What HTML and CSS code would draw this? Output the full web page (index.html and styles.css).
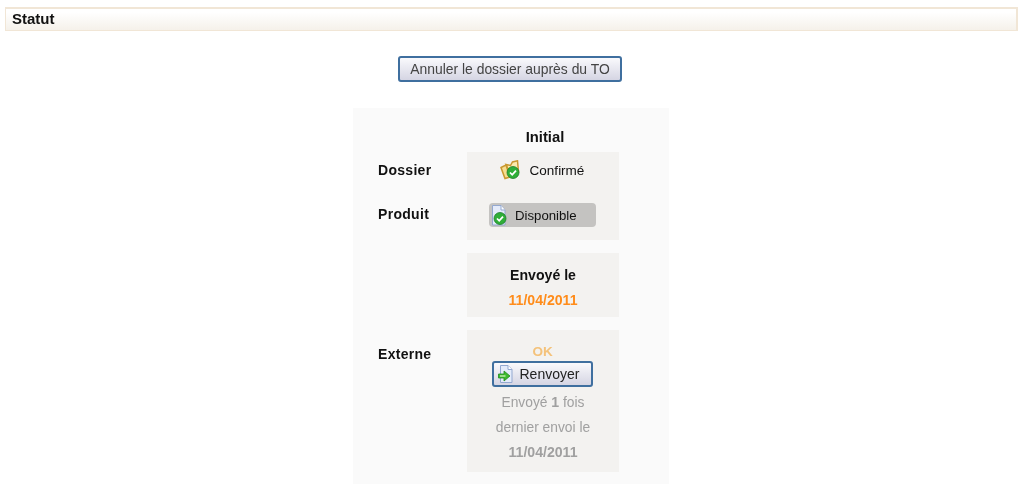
FILE: index.html
```html
<!DOCTYPE html>
<html lang="fr">
<head>
<meta charset="utf-8">
<title>Statut</title>
<link rel="stylesheet" href="styles.css">
</head>
<body>
<h2 class="section-title">Statut</h2>
<div class="actions"><button class="btn btn-cancel" type="button">Annuler le dossier auprès du TO</button></div>
<section class="panel">
  <div class="col-title">Initial</div>
  <div class="row">
    <div class="labels labels-status">
      <span>Dossier</span>
      <span>Produit</span>
    </div>
    <div class="cell cell-status">
      <div class="state">
        <svg class="ico" width="20" height="20" viewBox="0 0 20 20">
          <path d="M1 7.500 6 5l4 12-5 1.500z" fill="#f6dd90" stroke="#c9982f" stroke-width="1.500"/>
          <path d="M6 4.500l4.500 1L12.500 2 17.500 .8l1 11.200-7 4z" fill="#fbeaae" stroke="#c9982f" stroke-width="1.500"/>
          <circle cx="13" cy="12.500" r="6" fill="#2fae38" stroke="#1d7d2a" stroke-width=".8"/>
          <path d="M10 12.500l2.200 2.300 3.800-4.200" fill="none" stroke="#fff" stroke-width="1.800"/>
        </svg>
        <span>Confirmé</span>
      </div>
      <div class="pill">
        <svg class="ico" width="18" height="22" viewBox="0 0 18 22">
          <path d="M1.500 1.500h8.500l4 4.500v15h-12.500z" fill="#e4ebfa" stroke="#93a8d0"/>
          <path d="M10 1.500v4.500h4" fill="#fff" stroke="#93a8d0"/>
          <circle cx="9" cy="14.500" r="6" fill="#2fae38" stroke="#1d7d2a" stroke-width=".8"/>
          <path d="M6 14.500l2.200 2.300 3.800-4.200" fill="none" stroke="#fff" stroke-width="1.800"/>
        </svg>
        <span>Disponible</span>
      </div>
    </div>
  </div>
  <div class="row">
    <div class="labels"></div>
    <div class="cell cell-sent">
      <strong class="sent-title">Envoyé le</strong>
      <strong class="sent-date">11/04/2011</strong>
    </div>
  </div>
  <div class="row">
    <div class="labels labels-ext"><span>Externe</span></div>
    <div class="cell cell-ext">
      <strong class="ok">OK</strong>
      <button class="btn btn-resend" type="button">
        <svg class="ico" width="16" height="20" viewBox="0 0 16 20">
          <path d="M2.500 1.500h7.500l4 4v13h-11.500z" fill="#e4ebfa" stroke="#93a8d0"/>
          <path d="M10 1.500v4h4" fill="#fff" stroke="#93a8d0"/>
          <path d="M.5 10h5.500v-3l6 5-6 5v-3h-5.500z" fill="#3dbb2e" stroke="#1f8a1f" stroke-width=".8"/>
          <path d="M2 12h5.500" stroke="#d8f8c8" stroke-width="1.200"/>
        </svg>
        <span>Renvoyer</span>
      </button>
      <p class="note">Envoyé <b>1</b> fois</p>
      <p class="note">dernier envoi le</p>
      <p class="note"><b>11/04/2011</b></p>
    </div>
  </div>
</section>
</body>
</html>
```
FILE: styles.css
```css
html, body { margin: 0; padding: 0; background: #fff; }
body {
  padding: 7px 6px 0 5px;
  font-family: "Liberation Sans", Arial, sans-serif;
  font-size: 13px;
  color: #111;
  height: 480px;
  overflow: hidden;
  filter: blur(.4px);
}
.section-title {
  margin: 0;
  height: 24px;
  box-sizing: border-box;
  border: 2px solid #f1e6d6;
  border-width: 2px 2px 1px 1px;
  background: linear-gradient(#ffffff 15%, #f5f1ea);
  padding-left: 6px;
  font-size: 15px;
  line-height: 19px;
  font-weight: bold;
  color: #111;
}
.actions { display: flex; justify-content: center; margin-top: 25px; padding-right: 3px; }
.btn {
  font-family: inherit;
  color: #444;
  border: 2px solid #3f6f9f;
  border-radius: 3px;
  background: linear-gradient(#f9f9fc, #d5d5e3);
  padding: 0;
}
.btn-cancel { width: 224px; height: 26px; font-size: 13.900px; }
.panel {
  width: 316px;
  height: 376px;
  box-sizing: border-box;
  margin: 26px 0 0 348px;
  background: #fafafa;
}
.col-title {
  height: 44px;
  box-sizing: border-box;
  padding: 20px 0 0 114px;
  width: 270px;
  text-align: center;
  font-weight: bold;
  font-size: 14.800px;
  line-height: 18px;
}
.row { display: flex; margin-bottom: 13px; }
.labels {
  width: 114px;
  box-sizing: border-box;
  padding-left: 25px;
  font-weight: bold;
  font-size: 14px;
  display: flex;
  flex-direction: column;
  letter-spacing: .3px;
}
.labels-status { padding-top: 10px; gap: 28px; }
.labels span { line-height: 16px; }
.labels-ext { padding-top: 16px; }
.cell {
  width: 152px;
  background: #f3f2f0;
  display: flex;
  flex-direction: column;
  align-items: center;
}
.cell-status { height: 88px; }
.state {
  display: flex;
  align-items: center;
  height: 20px;
  margin-top: 8px;
  gap: 10px;
  margin-right: 2px;
  font-size: 13.500px;
}
.pill {
  display: flex;
  align-items: center;
  box-sizing: border-box;
  width: 107px;
  height: 24px;
  margin-top: 23px;
  margin-right: 1px;
  padding-left: 2px;
  gap: 6px;
  background: #c4c3c1;
  border-radius: 4px;
  font-size: 13.200px;
}
.ico { flex: none; }
.cell-sent { height: 64px; }
.sent-title { margin-top: 14px; line-height: 16px; font-size: 14.100px; }
.sent-date { margin-top: 9px; line-height: 16px; color: #ff8c1a; font-size: 14.100px; }
.cell-ext { height: 142px; }
.ok { margin-top: 15px; line-height: 14px; color: #f4c27a; font-size: 13.500px; margin-right: 1px; }
.btn-resend {
  display: flex;
  align-items: center;
  justify-content: flex-start;
  width: 101px;
  height: 26px;
  margin: 2px 2px 3px 0;
  padding-left: 4px;
  gap: 6px;
  font-size: 14px;
  color: #222;
}
.note {
  margin: 0;
  color: #a0a0a0;
  line-height: 24.500px;
  font-size: 13.800px;
}
.note b { font-size: 14.100px; }
```
